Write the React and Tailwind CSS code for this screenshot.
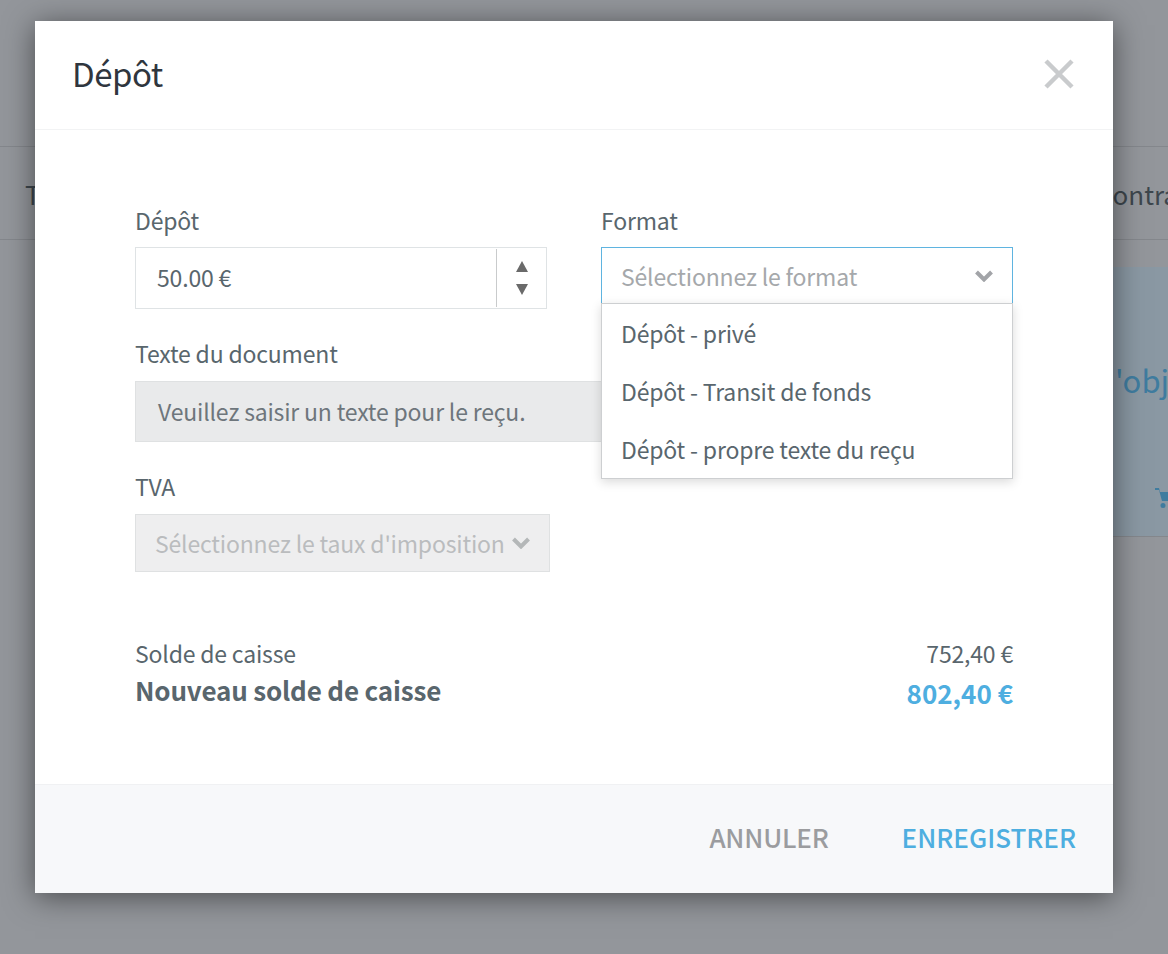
import React from 'react';

const font = "font-['Noto_Sans_CJK_SC','Noto_Sans',sans-serif]";
const body = 'text-[23px] leading-[32px] tracking-[-0.18px]';

function Chevron({ className }) {
  return (
    <svg viewBox="0 0 18 12" className={className} fill="none" stroke="currentColor" strokeWidth="4">
      <path d="M1.5 2 9 9.5 16.5 2" />
    </svg>
  );
}

// page behind the dimmed overlay
function Backdrop() {
  return (
    <div className="w-[1168px] h-[954px] bg-[#93969b] overflow-hidden">
      <div className="h-[147px] border-b border-[#84878c]" />
      <div className="h-[93px] border-b border-[#84878c] flex justify-between items-center pl-[25px] text-[26px] text-[#3d464d]">
        <span>T</span>
        <span className="mr-[-10px]">ontra</span>
      </div>
      <div className="mt-[27px] ml-auto w-[100px] h-[270px] bg-[#8a98a3] border-b border-[#84878c] pt-[93px] pl-[47px]">
        <span className="block text-[31px] leading-[40px] text-[#3f7c9f] whitespace-nowrap">'obje</span>
      </div>
    </div>
  );
}

export default function App() {
  return (
    <div className={`relative w-[1168px] h-[954px] overflow-hidden ${font}`}>
      <Backdrop />
      <svg viewBox="0 0 24 24" className="absolute left-[1154px] top-[486px] w-[24px] h-[24px] text-[#3f7c9f]" fill="currentColor">
        <path d="M1 2h4l1 4h17l-3 9H8L5 4H1zM9 17a2.5 2.5 0 1 0 0 5 2.5 2.5 0 0 0 0-5zm10 0a2.5 2.5 0 1 0 0 5 2.5 2.5 0 0 0 0-5z" />
      </svg>

      <div className="absolute left-[35px] top-[21px] w-[1078px] h-[872px] bg-white flex flex-col shadow-[0_4px_28px_rgba(0,0,0,0.5)]">
        <div className="h-[109px] shrink-0 border-b border-[#f2f3f4] flex items-center justify-between pl-[37px] pr-[39px]">
          <h2 className="text-[33px] leading-[44px] tracking-[-0.5px] text-[#2f363e] mt-[-4px]">Dépôt</h2>
          <svg viewBox="0 0 30 30" className="w-[30px] h-[30px] mt-[-2px] text-[#c9cbcd]" fill="none" stroke="currentColor" strokeWidth="4.5">
            <path d="M2 2 28 28M28 2 2 28" />
          </svg>
        </div>

        <div className="flex-1 relative pl-[100px] pr-[100px] pt-[74px] text-[#59666d]">
          <div className="flex gap-[54px]">
            <div className="w-[412px]">
              <label className={`block ${body}`}>Dépôt</label>
              <div className="mt-[11px] h-[62px] border border-[#dfe3e5] flex items-center">
                <span className={`flex-1 pl-[21px] pb-[2px] ${body}`}>50.00 €</span>
                <div className="w-[50px] h-[58px] border-l border-[#c9cbcc] flex flex-col items-center justify-center gap-[12px]">
                  <span className="w-0 h-0 border-x-[6.5px] border-x-transparent border-b-[11px] border-b-[#6a6a6a]" />
                  <span className="w-0 h-0 border-x-[6.5px] border-x-transparent border-t-[11px] border-t-[#6a6a6a]" />
                </div>
              </div>
            </div>
            <div className="relative w-[412px]">
              <label className={`block ${body}`}>Format</label>
              <div className="mt-[11px] h-[57px] border border-[#5fb4e0] border-b-0 flex items-center justify-between pl-[19px] pr-[19px]">
                <span className={`${body} text-[#a5a8ab]`}>Sélectionnez le format</span>
                <Chevron className="w-[18px] h-[12px] text-[#a2a4a8]" />
              </div>
              <div className="absolute left-0 right-0 top-[99px] h-[176px] z-10 bg-white border border-[#cdcfd1] shadow-[0_3px_10px_rgba(0,0,0,0.15)] pl-[19px] pt-[13px] flex flex-col gap-[26px]">
                <span className={body}>Dépôt - privé</span>
                <span className={body}>Dépôt - Transit de fonds</span>
                <span className={body}>Dépôt - propre texte du reçu</span>
              </div>
            </div>
          </div>

          <label className={`block mt-[28px] ${body}`}>Texte du document</label>
          <div className={`mt-[12px] h-[61px] w-[500px] bg-[#e9eaeb] border border-[#dfe1e2] pl-[22px] pb-[2px] flex items-center ${body} text-[#6e767c]`}>
            Veuillez saisir un texte pour le reçu.
          </div>

          <label className={`block mt-[28px] ${body}`}>TVA</label>
          <div className="mt-[12px] h-[58px] w-[415px] bg-[#eeeeef] border border-[#dfe1e2] pl-[19px] pr-[19px] flex items-center justify-between">
            <span className={`${body} text-[#babcbe] whitespace-nowrap`}>Sélectionnez le taux d'imposition</span>
            <Chevron className="w-[18px] h-[12px] shrink-0 text-[#b4b7b8]" />
          </div>

          <div className="mt-[65px] flex justify-between items-center h-[32px]">
            <span className={body}>Solde de caisse</span>
            <span className={body}>752,40 €</span>
          </div>
          <div className="mt-[5px] flex justify-between items-start">
            <span className="text-[26px] leading-[32px] tracking-[-0.17px] font-bold">Nouveau solde de caisse</span>
            <span className="text-[26px] leading-[32px] font-bold text-[#4eaee0] mt-[3px]">802,40 €</span>
          </div>
        </div>

        <div className="h-[109px] shrink-0 bg-[#f7f8fa] border-t border-[#f0f1f3] flex items-center justify-end pr-[37px] pb-[4px] gap-[73px] text-[26px] leading-[34px] font-medium">
          <span className="text-[#9b9c9f] tracking-[-0.2px]">ANNULER</span>
          <span className="text-[#4eaee0]">ENREGISTRER</span>
        </div>
      </div>
    </div>
  );
}
